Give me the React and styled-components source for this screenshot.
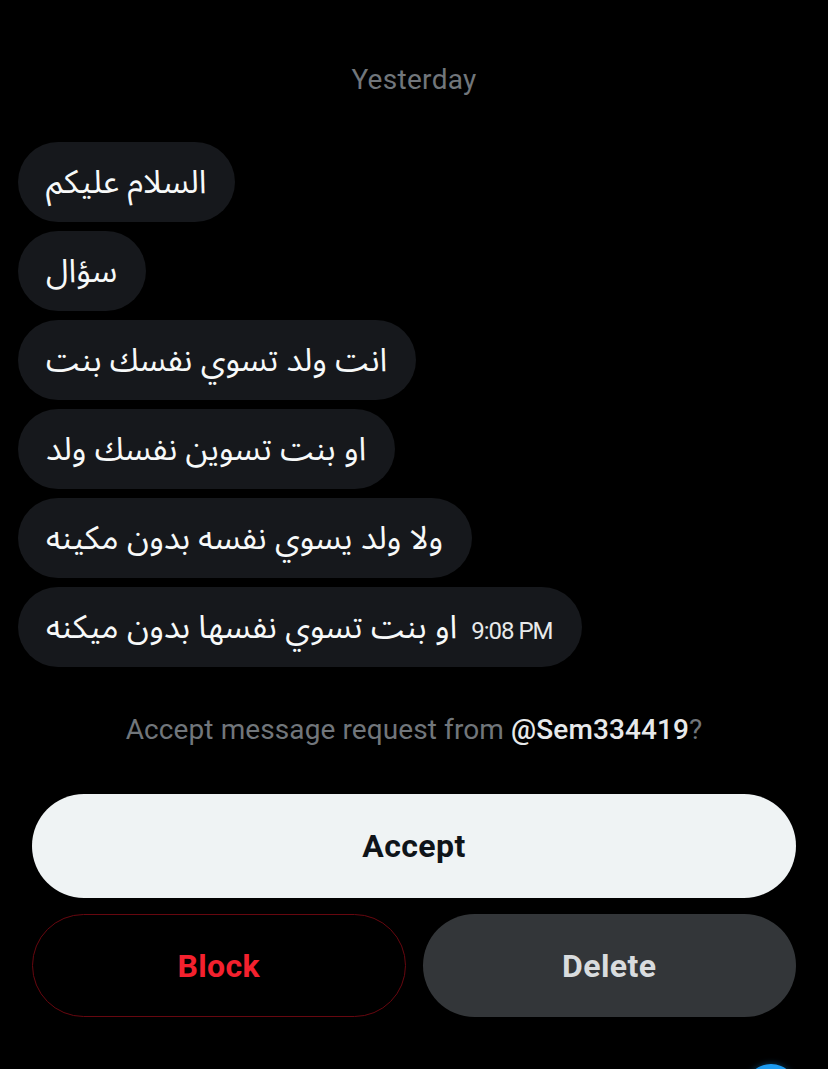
import React from 'react';
import styled, { createGlobalStyle } from 'styled-components';

const GlobalStyle = createGlobalStyle`
  html, body {
    margin: 0;
    padding: 0;
    background: #000;
  }
  * {
    box-sizing: border-box;
  }
`;

const Page = styled.div`
  position: relative;
  width: 828px;
  height: 1069px;
  overflow: hidden;
  background: #000;
  font-family: Roboto, 'Liberation Sans', sans-serif;
  display: flex;
  flex-direction: column;
`;

const DateLabel = styled.div`
  margin-top: 62px;
  height: 36px;
  line-height: 36px;
  text-align: center;
  font-size: 28px;
  letter-spacing: 0.3px;
  color: #71767b;
`;

const Thread = styled.div`
  margin-top: 44px;
  padding: 0 18px;
  display: flex;
  flex-direction: column;
  align-items: flex-start;
  gap: 9px;
`;

const Bubble = styled.div`
  height: 80px;
  padding: 0 29px 0 28px;
  border-radius: 40px;
  background: #16181c;
  display: flex;
  align-items: center;
  gap: 14px;
`;

const BubbleText = styled.span`
  direction: rtl;
  font-family: 'Noto Sans Arabic', 'DejaVu Sans', 'Noto Sans', sans-serif;
  font-size: 32.5px;
  color: #f7f9f9;
  white-space: nowrap;
`;

const Time = styled.span`
  font-family: Roboto, 'Liberation Sans', sans-serif;
  font-size: 24px;
  letter-spacing: -1px;
  color: #e7e9ea;
  padding-top: 8px;
  white-space: nowrap;
`;

const RequestText = styled.div`
  margin-top: 46px;
  height: 34px;
  line-height: 34px;
  text-align: center;
  font-size: 28px;
  letter-spacing: 0.1px;
  color: #71767b;
`;

const Handle = styled.span`
  color: #e7e9ea;
  font-weight: 500;
`;

const Actions = styled.div`
  margin-top: 47px;
  padding: 0 32px;
  display: flex;
  flex-direction: column;
  gap: 16px;
`;

const ButtonRow = styled.div`
  display: grid;
  grid-template-columns: 1fr 1fr;
  gap: 17px;
`;

const Button = styled.button`
  height: ${props => (props.$tall ? '104px' : '103px')};
  border-radius: 52px;
  font-family: Roboto, 'Liberation Sans', sans-serif;
  font-size: 32px;
  font-weight: 700;
  letter-spacing: 0.4px;
  cursor: pointer;
  border: ${props => (props.$variant === 'block' ? '1.5px solid #67070f' : 'none')};
  background: ${props =>
    props.$variant === 'accept' ? '#eff3f4' : props.$variant === 'delete' ? '#333639' : 'transparent'};
  color: ${props =>
    props.$variant === 'accept' ? '#0f1419' : props.$variant === 'delete' ? '#d9dcde' : '#f4212e'};
`;

const Fab = styled.div`
  position: absolute;
  top: 1064px;
  left: 745px;
  width: 52px;
  height: 52px;
  border-radius: 50%;
  background: #1d9bf0;
  box-shadow: 0 0 6px rgba(29, 155, 240, 0.4);
`;

const messages = [
  'السلام عليكم',
  'سؤال',
  'انت ولد تسوي نفسك بنت',
  'او بنت تسوين نفسك ولد',
  'ولا ولد يسوي نفسه بدون مكينه',
  'او بنت تسوي نفسها بدون ميكنه',
];

const App = () => {
  return (
    <Page>
      <GlobalStyle />
      <DateLabel>Yesterday</DateLabel>
      <Thread>
        {messages.map((text, i) => (
          <Bubble key={i}>
            <BubbleText>{text}</BubbleText>
            {i === messages.length - 1 && <Time>9:08 PM</Time>}
          </Bubble>
        ))}
      </Thread>
      <RequestText>
        Accept message request from <Handle>@Sem334419</Handle>?
      </RequestText>
      <Actions>
        <Button $variant="accept" $tall>Accept</Button>
        <ButtonRow>
          <Button $variant="block">Block</Button>
          <Button $variant="delete">Delete</Button>
        </ButtonRow>
      </Actions>
      <Fab />
    </Page>
  );
};

export default App;
